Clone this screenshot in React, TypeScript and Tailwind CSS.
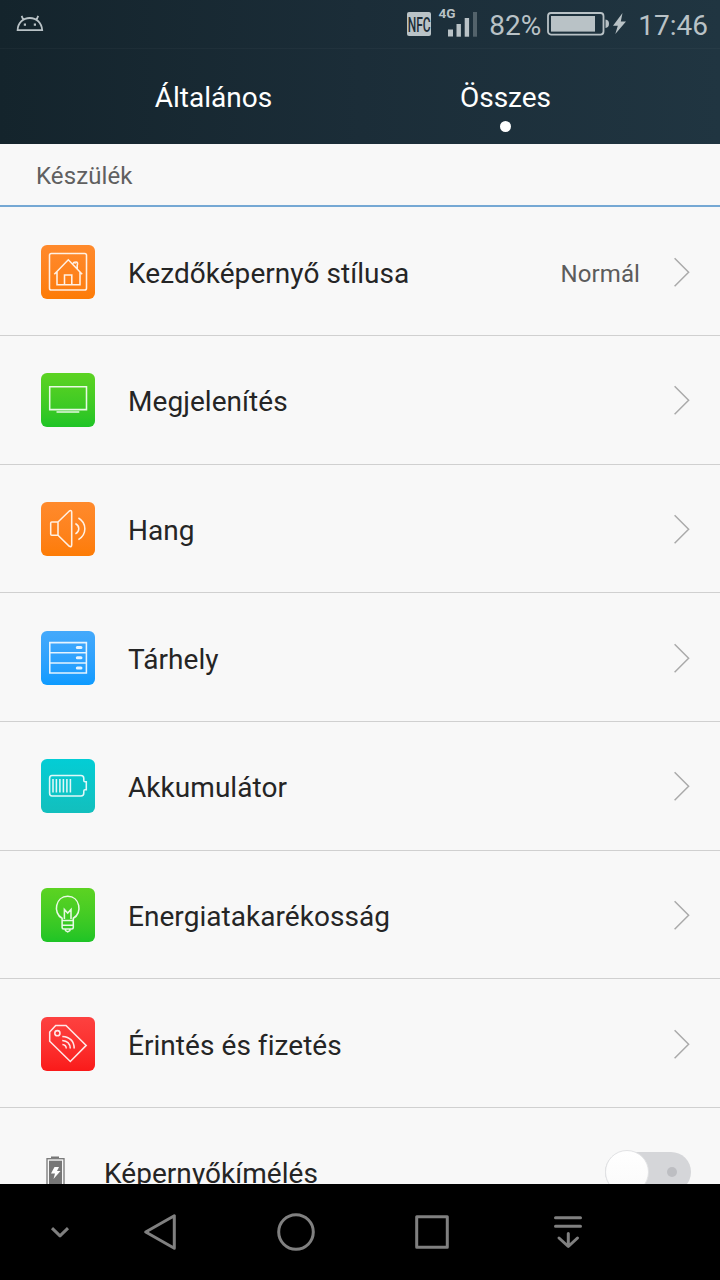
import type { ReactNode } from 'react';

type Row = { label: string; value?: string; tile: string; icon: ReactNode };

const rows: Row[] = [
  {
    label: 'Kezdőképernyő stílusa',
    value: 'Normál',
    tile: 'from-[#ff8a2c] to-[#fd7c05]',
    icon: (
      <>
        <rect x="8.5" y="8.5" width="37" height="36.5" rx="1.8" />
        <path d="M13.3 29.3L27.3 14.8L41.2 29.3M16 27V39.8H39V27M23.5 39.8V30H30.8V39.8M32.4 18.7C32.2 16.4 34.5 17.5 34.4 18.6M34 17.2C36.8 16.5 37 18.7 36.2 20.4V24" />
      </>
    ),
  },
  {
    label: 'Megjelenítés',
    tile: 'from-[#5cd322] to-[#1dc426]',
    icon: <path d="M8.7 13.7H45.5V36.6H8.7ZM15.5 39H38.3" />,
  },
  {
    label: 'Hang',
    tile: 'from-[#ff8a2c] to-[#fd7c05]',
    icon: (
      <path d="M17 20H10.7Q9.7 20 9.7 21V32.2Q9.7 33.2 10.7 33.2H17M17 20V33.2L28.3 44.3Q30.7 45.4 30.7 42.8V10.2Q30.7 7.6 28.3 9L17 20M34.4 21.5Q37.8 23.3 37.8 26.7Q37.8 30 34.4 31.9M37.4 16C46 21 46 32.5 37.4 37.6" />
    ),
  },
  {
    label: 'Tárhely',
    tile: 'from-[#44a9fb] to-[#0c9bff]',
    icon: (
      <>
        <path d="M8.8 11.6H45.4V42H8.8ZM8.8 21.8H45.4M8.8 32H45.4" />
        <path strokeWidth="3" strokeLinecap="round" d="M36.3 16.6H40M36.3 26.7H40M36.3 36.9H40" />
      </>
    ),
  },
  {
    label: 'Akkumulátor',
    tile: 'from-[#03cdd5] to-[#12bfbd]',
    icon: (
      <path d="M11 16.5H40Q42.8 16.5 42.8 19.4V21.5Q42.8 22.8 44 22.8H45.3V30.7H44Q42.8 30.7 42.8 32V34Q42.8 37 40 37H11Q8.6 37 8.6 34V19.4Q8.6 16.5 11 16.5ZM12 20V33.6M15.4 20V33.6M18.9 20V33.6M22.4 20V33.6M25.9 20V33.6M29.4 20V33.6" />
    ),
  },
  {
    label: 'Energiatakarékosság',
    tile: 'from-[#5cd322] to-[#1dc426]',
    icon: (
      <path d="M21.1 32.3V30.3C11.5 25 14.5 8.3 26.7 8.3S41.9 25 32.3 30.3V32.3M20.4 32.5H33M21.1 32.5V39.5Q21.1 41 22.6 41H30.8Q32.3 41 32.3 39.5V32.5M21.1 37.2H32.3M24.5 41V42.5L26.7 43.8L28.9 42.5V41M23.4 31V21.5L26.7 25L30 21.5V31" />
    ),
  },
  {
    label: 'Érintés és fizetés',
    tile: 'from-[#fd4140] to-[#fa1919]',
    icon: (
      <>
        <path d="M14.7 8.4H25L45.2 28.4L29.3 44.5L8.7 24.2V15Z" />
        <circle cx="16.4" cy="16.2" r="2.6" />
        <path d="M21.4 27.6Q25 27.8 25.3 31.5M21.2 23.5Q29 24 29.3 31.5M21.3 19.5Q33 20.2 33.2 31.5" />
      </>
    ),
  },
];

function StatusBar() {
  return (
    <div className="flex h-12 items-center pl-4 pr-3 text-[#b9c2c6]">
      <svg className="mt-1 h-7 w-7" viewBox="0 0 28 28" fill="none" stroke="currentColor" strokeWidth="1.8">
        <path d="M1.6 18.2C1.8 11 6.9 6 13.8 6S25.7 11 26.2 18.2ZM7.2 7.6L5.6 3.8M20.6 7.6L22.2 3.8" />
        <path d="M7.8 12.6H10M17.8 12.6H20" strokeWidth="2.2" />
      </svg>
      <div className="flex-1" />
      <div className="mr-[6px] flex h-6 w-6 shrink-0 items-center justify-center rounded-[2px] bg-[#bac3c7]">
        <span className="scale-x-[0.6] pt-px text-[20px] leading-none font-medium text-[#1c2d37]">NFC</span>
      </div>
      <svg className="h-12 w-[40px]" viewBox="0 0 40 48" fill="currentColor">
        <text x="1.5" y="18" fontSize="12.5" fontWeight="700" fontFamily="Roboto, sans-serif" textLength="17" lengthAdjust="spacingAndGlyphs">4G</text>
        <rect x="11" y="29.5" width="5" height="7" />
        <rect x="19.5" y="24" width="4.4" height="12.7" />
        <rect x="27.7" y="18" width="4.4" height="18.7" />
        <rect x="36" y="12" width="4" height="24.7" opacity=".35" />
      </svg>
      <span className="ml-[12px] w-[53px] pt-1 text-[28px] leading-none">82%</span>
      <svg className="ml-[5px] h-12 w-[80px]" viewBox="0 0 80 48" fill="currentColor">
        <rect x="1" y="13" width="55.5" height="21.6" rx="3" fill="none" stroke="currentColor" strokeWidth="1.8" />
        <rect x="4" y="16" width="44" height="15.6" />
        <path d="M58.5 19.5Q62 20 62 23.8Q62 27.6 58.5 28ZM75.5 13L66 25.7H70.8L68.3 34L79 21.5H73.8Z" />
      </svg>
      <span className="ml-[11px] pt-1 text-[28px] leading-none">17:46</span>
    </div>
  );
}

function Chevron() {
  return (
    <svg className="h-8 w-5" viewBox="0 0 20 32" fill="none" stroke="#aaaaaa" strokeWidth="1.5">
      <path d="M2.6 2.2L16.6 16.2L2.6 30.2" />
    </svg>
  );
}

function SettingRow({ row }: { row: Row }) {
  return (
    <div className="flex h-[128.67px] shrink-0 items-center border-b border-[#d0d0d0] pl-[41px] pr-7 pt-px">
      <svg
        className={`h-[54px] w-[54px] shrink-0 rounded-[6px] bg-linear-to-b ${row.tile}`}
        viewBox="0 0 54 54"
        fill="none"
        stroke="#fff"
        strokeOpacity=".88"
        strokeWidth="1.55"
      >
        {row.icon}
      </svg>
      <span className="ml-[33px] flex-1 pt-[4px] text-[28px] leading-8 tracking-[0.05px] text-[#252525]">{row.label}</span>
      {row.value && <span className="mr-8 pt-[4px] text-[24px] leading-8 tracking-[0.1px] text-[#5c5c5c]">{row.value}</span>}
      <Chevron />
    </div>
  );
}

export default function App() {
  return (
    <div className="flex h-[1280px] w-[720px] flex-col overflow-hidden bg-[#f8f8f8] font-['Roboto',sans-serif]">
      <header className="h-36 shrink-0 bg-linear-to-r from-[#14242c] via-[#1b2d38] to-[#203541]">
        <StatusBar />
        <div className="flex h-24 border-t border-white/3 px-[60px] text-[28px] leading-8 text-white">
          <div className="w-[307px] pt-[33px] text-center">Általános</div>
          <div className="flex w-[277px] flex-col items-center pt-[33px]">
            <span>Összes</span>
            <span className="mt-[7px] h-[11px] w-[11px] rounded-full bg-white" />
          </div>
        </div>
      </header>
      <div className="flex h-[63px] shrink-0 items-center border-b-2 border-[#75a8d4] pl-9 pt-[2px] text-[24px] tracking-[0.1px] text-[#606060]">Készülék</div>
      <main className="flex min-h-0 flex-1 flex-col overflow-hidden pt-[0.45px]">
        {rows.map((row) => (
          <SettingRow key={row.label} row={row} />
        ))}
        <div className="flex h-[128px] shrink-0 items-center pl-[45px] pr-[29px]">
          <svg className="h-[32px] w-5" viewBox="0 0 20 32" fill="#777">
            <path d="M6 .5H14V2H6Z" />
            <rect x="2" y="2.7" width="17" height="28" fill="none" stroke="#777" strokeWidth="1.3" />
            <path d="M4 4.7H17V29H4Z" />
            <path d="M9.5 11H14L12 15H15.5L8.5 23L10 17.5H6Z" fill="#fff" />
          </svg>
          <span className="ml-[39px] flex-1 pt-[4px] text-[28px] leading-8 tracking-[0.05px] text-[#252525]">Képernyőkímélés</span>
          <div className="flex h-10 w-[86px] items-center justify-between rounded-full bg-[#d5d6d9]">
            <span className="h-[44px] w-[44px] rounded-full border border-[#e2e3e5] bg-linear-to-b from-white to-[#fafafa]" />
            <span className="mr-[14px] h-[10px] w-[10px] rounded-full bg-[#bdbec2]" />
          </div>
        </div>
      </main>
      <nav className="h-24 shrink-0 bg-black">
        <svg className="h-24 w-[720px]" viewBox="0 0 720 96" fill="none" stroke="#808080" strokeWidth="3" strokeLinecap="round" strokeLinejoin="round">
          <path d="M52 44.2L60 51.8L68 44.2" strokeLinecap="butt" />
          <path d="M145.7 48L174.3 31.7V64.3Z" />
          <circle cx="296" cy="48" r="17.3" />
          <rect x="416.7" y="32.7" width="30.6" height="30.6" />
          <path d="M555.5 33.7H580.5M555.5 42.3H580.5M568.3 49.5V62M559 54L568.3 62.5L577.5 54" />
        </svg>
      </nav>
    </div>
  );
}
